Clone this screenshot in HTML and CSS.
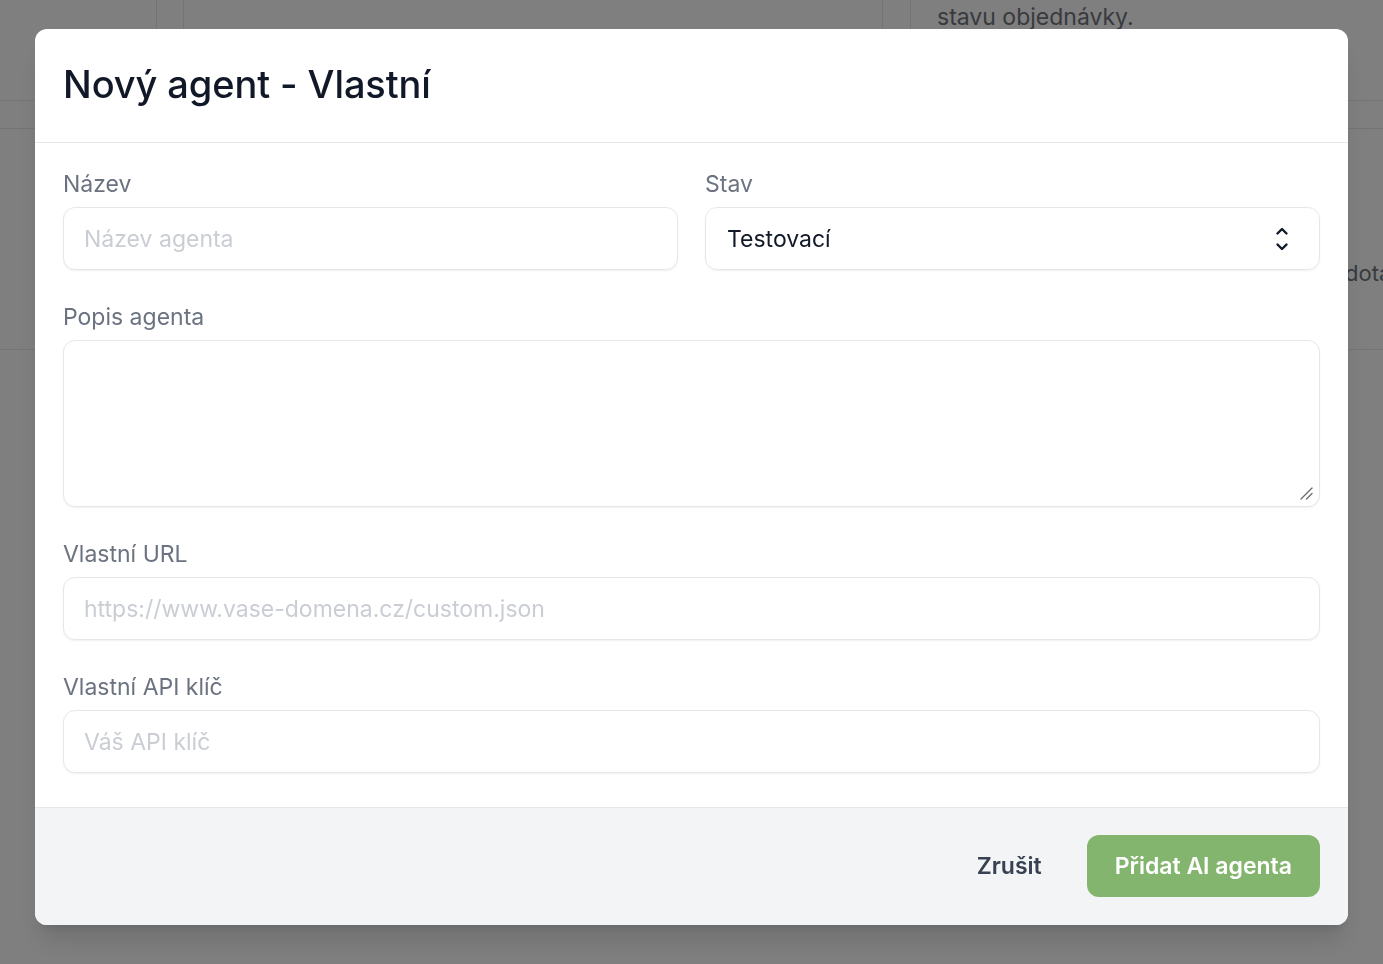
FILE: index.html
```html
<!DOCTYPE html>
<html lang="cs">
<head>
<meta charset="utf-8">
<title>Nový agent - Vlastní</title>
<link rel="stylesheet" href="styles.css">
</head>
<body>
<div class="page">
  <div class="row row-top">
    <div class="cell c1"></div>
    <div class="cell c2"></div>
    <div class="cell c3"></div>
    <div class="cell c4"></div>
    <div class="cell c5"><p class="bg-text">stavu objednávky.</p></div>
  </div>
  <div class="row row-mid"></div>
  <div class="row row-big"><p class="bg-text dota">dotazy</p></div>
</div>
<div class="overlay"></div>
<div class="modal" role="dialog">
  <header class="modal-head">
    <h1 class="modal-title">Nový agent - Vlastní</h1>
  </header>
  <form class="modal-body">
    <div class="grid2">
      <div class="field">
        <label class="label" for="name">Název</label>
        <input class="input" id="name" type="text" placeholder="Název agenta">
      </div>
      <div class="field">
        <label class="label" for="state">Stav</label>
        <div class="select">
          <span class="select-value">Testovací</span>
          <svg class="select-icon" width="14" height="26" viewBox="0 0 14 26" fill="none" stroke="#111827" stroke-width="2.4" stroke-linecap="round" stroke-linejoin="round"><path d="M2.5 7.5 L7 3 L11.5 7.5"/><path d="M2.5 18.5 L7 23 L11.5 18.5"/></svg>
        </div>
      </div>
    </div>
    <div class="field">
      <label class="label" for="desc">Popis agenta</label>
      <div class="textarea-wrap">
        <textarea class="input textarea" id="desc"></textarea>
        <svg class="grip" width="14" height="14" viewBox="0 0 14 14" fill="none" stroke="#6b6b6b" stroke-width="1.3" stroke-linecap="round"><path d="M2 13 L13 2"/><path d="M7.5 13 L13 7.5"/></svg>
      </div>
    </div>
    <div class="field">
      <label class="label" for="url">Vlastní URL</label>
      <input class="input" id="url" type="text" placeholder="https://www.vase-domena.cz/custom.json">
    </div>
    <div class="field">
      <label class="label" for="key">Vlastní API klíč</label>
      <input class="input" id="key" type="text" placeholder="Váš API klíč">
    </div>
  </form>
  <footer class="modal-foot">
    <button class="btn btn-cancel" type="button">Zrušit</button>
    <button class="btn btn-primary" type="button">Přidat AI agenta</button>
  </footer>
</div>
</body>
</html>
```
FILE: styles.css
```css
* { box-sizing: border-box; }
html, body { margin: 0; padding: 0; }
body {
  width: 1383px;
  height: 964px;
  overflow: hidden;
  font-family: Inter, "Noto Sans", sans-serif;
  background: #ffffff;
}

/* underlying page */
.page { width: 1383px; }
.row { display: flex; border-bottom: 1px solid #e7e8ea; }
.row-top { height: 101px; }
.row-mid { height: 28px; }
.row-big { height: 221px; overflow: hidden; }
.cell { height: 100%; }
.c1 { width: 157px; border-right: 1px solid #e7e8ea; }
.c2 { width: 27px; border-right: 1px solid #e7e8ea; }
.c3 { width: 699px; border-right: 1px solid #e7e8ea; }
.c4 { width: 28px; border-right: 1px solid #e7e8ea; }
.c5 { flex: 1; padding-left: 26px; }
.bg-text {
  margin: 0;
  font-size: 23px;
  line-height: 30px;
  color: #70747d;
}
.c5 .bg-text { margin-top: 2px; }
.dota { margin-top: 129px; padding-left: 1345px; white-space: nowrap; font-size: 22px; }

.overlay {
  position: fixed;
  inset: 0;
  background: rgba(0, 0, 0, 0.5);
}

/* modal */
.modal {
  position: fixed;
  top: 29px;
  left: 35px;
  width: 1313px;
  background: #ffffff;
  border-radius: 12px;
  overflow: hidden;
  box-shadow: 0 20px 25px -5px rgba(0,0,0,0.12), 0 8px 10px -6px rgba(0,0,0,0.1);
}
.modal-head {
  padding: 30px 28px 33px;
  border-bottom: 1px solid #e5e7eb;
}
.modal-title {
  margin: 0;
  font-size: 38px;
  line-height: 50px;
  font-weight: 500;
  color: #111827;
  letter-spacing: -0.1px;
}
.modal-body {
  padding: 27px 28px 1px;
  display: flex;
  flex-direction: column;
}
.grid2 {
  display: grid;
  grid-template-columns: 1fr 1fr;
  column-gap: 27px;
}
.field { display: flex; flex-direction: column; margin-bottom: 33px; }
.label {
  font-size: 23px;
  line-height: 28px;
  color: #6b7280;
  margin-bottom: 9px;
}
.input {
  width: 100%;
  height: 63px;
  border: 1px solid #e5e7eb;
  border-radius: 12px;
  box-shadow: 0 1px 2px rgba(0,0,0,0.06);
  padding: 0 20px;
  font-family: Inter, "Noto Sans", sans-serif;
  font-size: 23px;
  color: #111827;
  background: #fff;
  outline: none;
}
.input::placeholder { color: #caced4; }
.textarea-wrap { position: relative; }
.textarea { display: block; height: 167px; padding: 16px 20px; resize: none; }
.grip { position: absolute; right: 7px; bottom: 7px; }
.select {
  height: 63px;
  border: 1px solid #e5e7eb;
  border-radius: 12px;
  box-shadow: 0 1px 2px rgba(0,0,0,0.06);
  padding: 0 30px 0 21px;
  display: flex;
  align-items: center;
  justify-content: space-between;
}
.select-value { font-size: 23px; color: #111827; }
.select-icon { display: block; }

.modal-foot {
  background: #f3f4f6;
  border-top: 1px solid #e5e7eb;
  padding: 27px 28px 28px;
  display: flex;
  justify-content: flex-end;
  align-items: center;
  gap: 17px;
}
.btn {
  height: 62px;
  border: 0;
  border-radius: 12px;
  font-family: Inter, "Noto Sans", sans-serif;
  font-size: 23px;
  font-weight: 600;
  padding: 0 28px;
  cursor: pointer;
}
.btn-cancel { background: transparent; color: #374151; }
.btn-primary { background: #84b56f; color: #ffffff; }
```
